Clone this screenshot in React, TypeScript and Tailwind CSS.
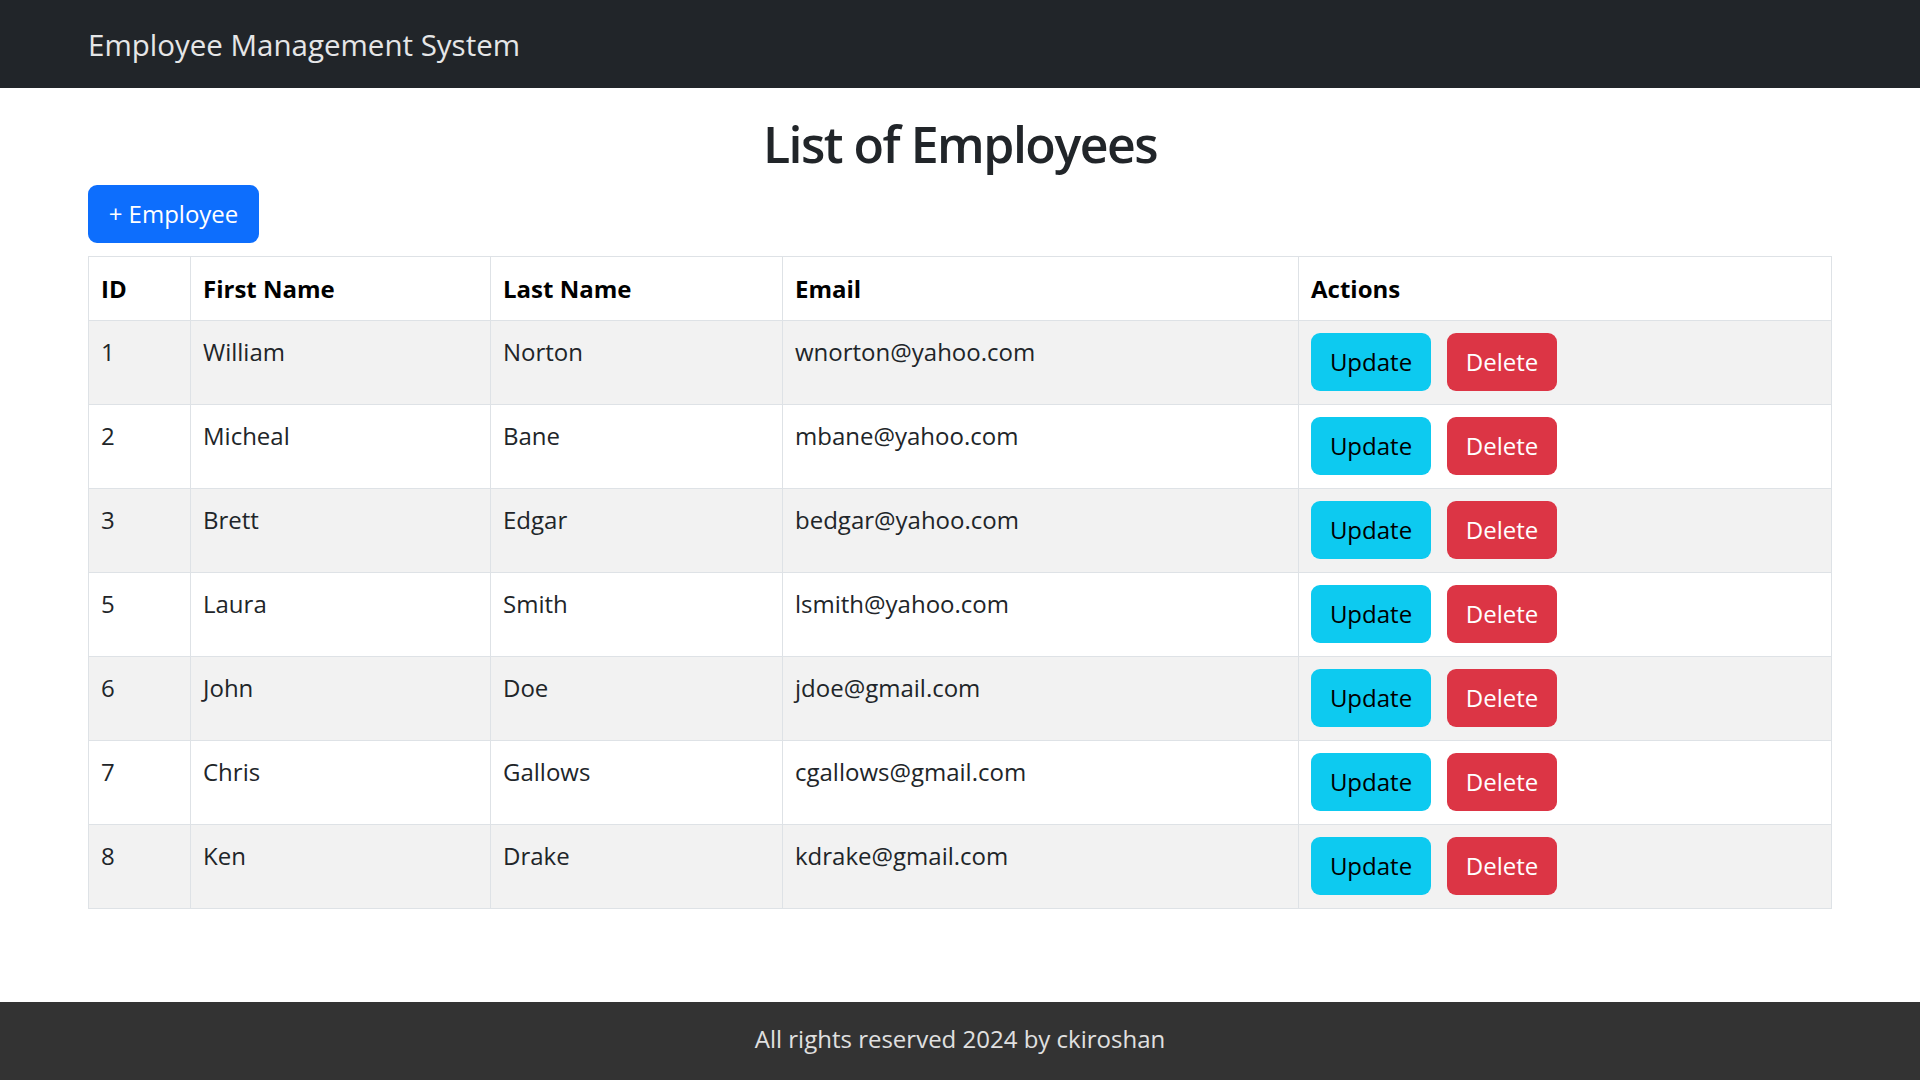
const employees = [
  { id: 1, firstName: "William", lastName: "Norton", email: "wnorton@yahoo.com" },
  { id: 2, firstName: "Micheal", lastName: "Bane", email: "mbane@yahoo.com" },
  { id: 3, firstName: "Brett", lastName: "Edgar", email: "bedgar@yahoo.com" },
  { id: 5, firstName: "Laura", lastName: "Smith", email: "lsmith@yahoo.com" },
  { id: 6, firstName: "John", lastName: "Doe", email: "jdoe@gmail.com" },
  { id: 7, firstName: "Chris", lastName: "Gallows", email: "cgallows@gmail.com" },
  { id: 8, firstName: "Ken", lastName: "Drake", email: "kdrake@gmail.com" },
];

const App = () => {
  return (
    <div className="min-h-screen flex flex-col bg-white font-['Open_Sans',sans-serif] text-[#212529]">
      {/* Navbar */}
      <nav className="h-[88px] bg-[#212529] flex items-center px-[88px] pt-[2px]">
        <span className="text-[29.5px] text-[#e5e6e7] leading-none">Employee Management System</span>
      </nav>

      {/* Main */}
      <main className="flex-1 px-[88px] pt-[21px]">
        <h1 className="text-center text-[50px] font-semibold tracking-[-1.5px] leading-[70px] mb-[6px]">
          List of Employees
        </h1>

        <button className="h-[58px] w-[171px] rounded-[9px] bg-[#0d6efd] text-white text-[24px]">
          + Employee
        </button>

        <table className="w-full mt-[13px] border-collapse table-fixed text-[24px]">
          <colgroup>
            <col className="w-[102px]" />
            <col className="w-[300px]" />
            <col className="w-[292px]" />
            <col className="w-[516px]" />
            <col />
          </colgroup>
          <thead>
            <tr className="h-[64px]">
              {["ID", "First Name", "Last Name", "Email", "Actions"].map((h) => (
                <th key={h} className="border border-[#dee2e6] px-3 text-left font-bold text-black leading-[36px]">
                  {h}
                </th>
              ))}
            </tr>
          </thead>
          <tbody>
            {employees.map((emp, index) => (
              <tr key={emp.id} className={index % 2 === 0 ? "bg-[#f2f2f2]" : "bg-white"}>
                <td className="border border-[#dee2e6] px-3 pt-[13px] h-[84px] align-top leading-[36px]">{emp.id}</td>
                <td className="border border-[#dee2e6] px-3 pt-[13px] align-top leading-[36px]">{emp.firstName}</td>
                <td className="border border-[#dee2e6] px-3 pt-[13px] align-top leading-[36px]">{emp.lastName}</td>
                <td className="border border-[#dee2e6] px-3 pt-[13px] align-top leading-[36px]">{emp.email}</td>
                <td className="border border-[#dee2e6] px-3 pt-[12px] align-top">
                  <div className="flex gap-4">
                    <button className="h-[58px] w-[120px] rounded-[9px] bg-[#0dcaf0] text-black text-[24px]">Update</button>
                    <button className="h-[58px] w-[110px] rounded-[9px] bg-[#dc3545] text-white text-[24px]">Delete</button>
                  </div>
                </td>
              </tr>
            ))}
          </tbody>
        </table>
      </main>

      {/* Footer */}
      <footer className="h-[78px] bg-[#333333] flex items-center justify-center pb-[4px]">
        <span className="text-[24px] text-[#e0e0e0]">All rights reserved 2024 by ckiroshan</span>
      </footer>
    </div>
  );
};

export default App;
